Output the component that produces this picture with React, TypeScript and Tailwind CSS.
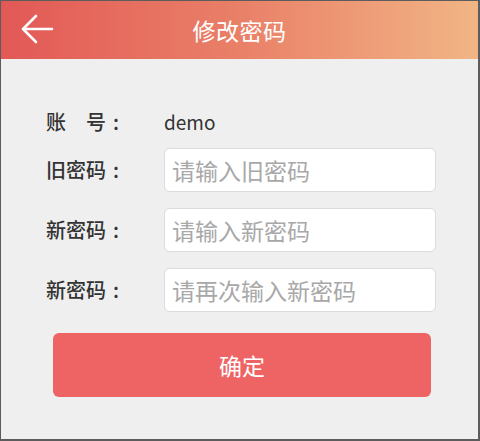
import React from 'react';

const font = { fontFamily: '"Noto Sans CJK SC", "Noto Sans", sans-serif' };

const fields = [
  { label: '旧密码', placeholder: '请输入旧密码' },
  { label: '新密码', placeholder: '请输入新密码' },
  { label: '新密码', placeholder: '请再次输入新密码' },
];

const Label: React.FC<{ text: string }> = ({ text }) => (
  <span className="w-[118px] shrink-0 flex items-center text-[20px] text-[#333] font-medium">
    <span>{text}</span>
    <span className="ml-[7px]">:</span>
  </span>
);

const App: React.FC = () => {
  return (
    <div
      className="w-[480px] h-[441px] overflow-hidden bg-[#efefef] border-t border-l border-r-2 border-b-2 border-[#5c5c5c] flex flex-col"
      style={font}
    >
      {/* header */}
      <div className="h-[58px] shrink-0 relative flex items-center justify-center bg-gradient-to-r from-[#e25856] via-[#e98068] to-[#f1b585]">
        <svg className="absolute left-[19px] top-[13px]" width="34" height="30" viewBox="0 0 34 30" fill="none">
          <path d="M3 15 H32 M16 2 L3 15 L16 28" stroke="white" strokeWidth="2.6" strokeLinecap="round" strokeLinejoin="round" />
        </svg>
        <span className="text-white text-[23px] leading-none tracking-[0.5px]">修改密码</span>
      </div>

      {/* form */}
      <div className="pt-[41px] pl-[45px] flex flex-col">
        <div className="h-[44px] flex items-center">
          <Label text={'账\u3000号'} />
          <span className="text-[19px] text-[#333]">demo</span>
        </div>
        <div className="mt-[4px] flex flex-col gap-[16px]">
          {fields.map((f, i) => (
            <div key={i} className="h-[44px] flex items-center">
              <Label text={f.label} />
              <input
                className="w-[272px] h-[44px] bg-white border border-[#dcdcdc] rounded-[6px] pl-[7px] text-[23px] text-[#333] placeholder:text-[#a8a8a8] outline-none"
                style={font}
                placeholder={f.placeholder}
              />
            </div>
          ))}
        </div>
        <button
          className="mt-[21px] ml-[7px] w-[378px] h-[64px] rounded-[6px] bg-[#ee6464] text-white text-[23px]"
          style={font}
        >
          确定
        </button>
      </div>
    </div>
  );
};

export default App;
